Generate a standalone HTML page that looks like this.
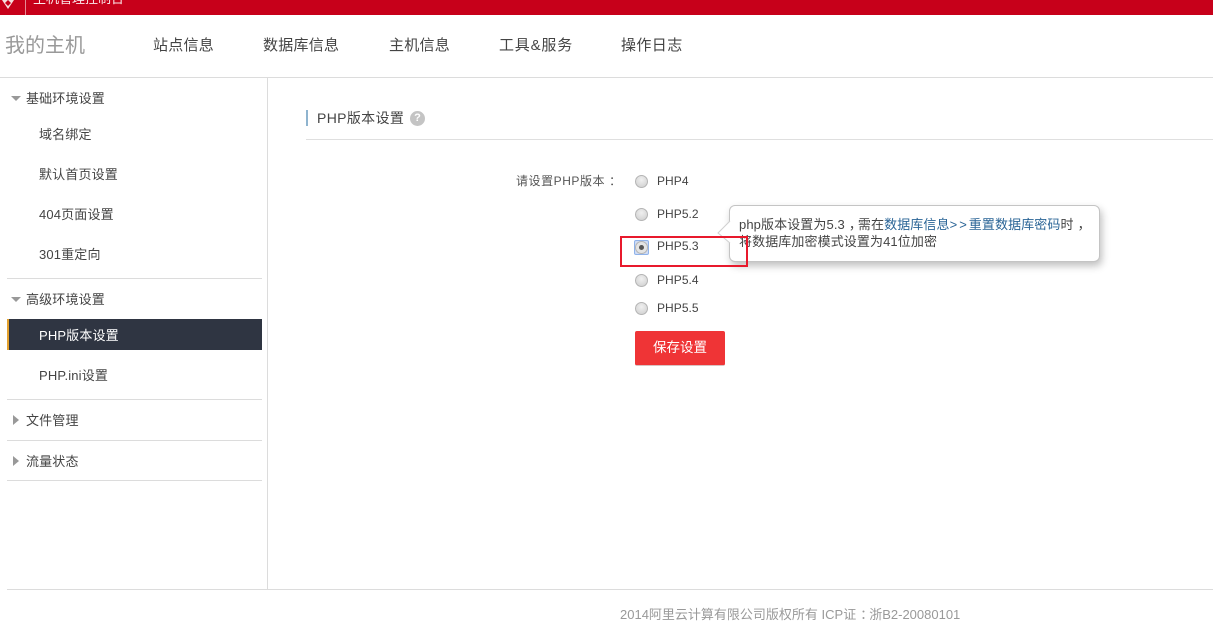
<!DOCTYPE html>
<html><head><meta charset="utf-8">
<style>
html,body{margin:0;padding:0;background:#fff;}
body{width:1213px;height:644px;position:relative;overflow:hidden;font-family:"Liberation Sans","Noto Sans CJK SC",sans-serif;color:#444;}
.t{position:absolute;white-space:nowrap;line-height:20px;}
.b{position:absolute;}
.nav{font-size:15px;top:36px;color:#444;letter-spacing:.25px;}
.s{font-size:13px;color:#444;letter-spacing:.15px;}
.r{position:absolute;left:635px;width:13px;height:13px;border-radius:50%;box-sizing:border-box;border:1px solid #b4b4b4;background:radial-gradient(circle at 50% 35%,#f0f0f0,#cdcdcd);}
.p{font-size:12px;left:657px;color:#444;letter-spacing:.05px;}
.tri{position:absolute;width:0;height:0;border-style:solid;}
a{color:#2a6496;text-decoration:none;}
.k{position:relative;left:4px;letter-spacing:0;}
</style></head><body>
<div class="b" style="left:0;top:0;width:1213px;height:15px;background:#c7001a;overflow:hidden;">
 <svg style="position:absolute;left:1px;top:-6px" width="14" height="16" viewBox="0 0 14 16"><path d="M7 1L13 6L7 15L1 6Z" fill="#f6dede"/><path d="M7 6L10 9L7 12L4 9Z" fill="#c7001a"/></svg>
 <div class="b" style="left:25px;top:0;width:1px;height:15px;background:#e58a95;"></div>
 <div class="t" style="left:33px;top:-11px;font-size:13px;color:#fbe6e8;">主机管理控制台</div>
</div>
<div class="t" style="left:5px;top:36px;font-size:20px;color:#999;">我的主机</div>
<div class="t nav" style="left:153px;">站点信息</div>
<div class="t nav" style="left:263px;">数据库信息</div>
<div class="t nav" style="left:389px;">主机信息</div>
<div class="t nav" style="left:499px;letter-spacing:.8px;">工具&amp;服务</div>
<div class="t nav" style="left:621px;letter-spacing:.4px;">操作日志</div>
<div class="b" style="left:0;top:77px;width:1213px;height:1px;background:#dcdcdc;"></div>
<div class="b" style="left:267px;top:78px;width:1px;height:512px;background:#dcdcdc;"></div>

<div class="tri" style="left:11px;top:96px;border-width:5px 5px 0 5px;border-color:#999 transparent transparent transparent;"></div>
<div class="t s" style="left:26px;top:89px;">基础环境设置</div>
<div class="t s" style="left:39px;top:125px;">域名绑定</div>
<div class="t s" style="left:39px;top:165px;">默认首页设置</div>
<div class="t s" style="left:39px;top:205px;">404页面设置</div>
<div class="t s" style="left:39px;top:245px;">301重定向</div>
<div class="b" style="left:7px;top:278px;width:255px;height:1px;background:#dcdcdc;"></div>
<div class="tri" style="left:11px;top:297px;border-width:5px 5px 0 5px;border-color:#999 transparent transparent transparent;"></div>
<div class="t s" style="left:26px;top:290px;">高级环境设置</div>
<div class="b" style="left:7px;top:319px;width:255px;height:31px;background:#2f3542;"></div>
<div class="b" style="left:7px;top:319px;width:2px;height:31px;background:#e3a12e;"></div>
<div class="t s" style="left:39px;top:326px;color:#fff;">PHP版本设置</div>
<div class="t s" style="left:39px;top:366px;">PHP.ini设置</div>
<div class="b" style="left:7px;top:399px;width:255px;height:1px;background:#dcdcdc;"></div>
<div class="tri" style="left:13px;top:415px;border-width:5px 0 5px 6px;border-color:transparent transparent transparent #999;"></div>
<div class="t s" style="left:26px;top:411px;">文件管理</div>
<div class="b" style="left:7px;top:440px;width:255px;height:1px;background:#dcdcdc;"></div>
<div class="tri" style="left:13px;top:456px;border-width:5px 0 5px 6px;border-color:transparent transparent transparent #999;"></div>
<div class="t s" style="left:26px;top:452px;">流量状态</div>
<div class="b" style="left:7px;top:480px;width:255px;height:1px;background:#dcdcdc;"></div>

<div class="b" style="left:306px;top:110px;width:2px;height:16px;background:#8fb4cf;"></div>
<div class="t" style="left:317px;top:108px;font-size:14px;color:#444;letter-spacing:.35px;">PHP版本设置</div>
<div class="b" style="left:410px;top:111px;width:15px;height:15px;border-radius:50%;background:#c4c4c4;color:#fff;font-size:11px;font-weight:bold;line-height:15px;text-align:center;">?</div>
<div class="b" style="left:306px;top:139px;width:907px;height:1px;background:#dfdfdf;"></div>

<div class="t" style="left:516px;top:171px;font-size:12px;letter-spacing:.55px;color:#555;">请设置PHP版本<span class="k">：</span></div>
<div class="r" style="top:175px;"></div><div class="t p" style="top:171px;">PHP4</div>
<div class="r" style="top:208px;"></div><div class="t p" style="top:204px;">PHP5.2</div>
<div class="b" style="left:634px;top:240px;width:15px;height:15px;box-sizing:border-box;border:1px solid #8fb2ea;border-radius:2px;background:#cfdcf5;"></div>
<div class="r" style="top:241px;background:#e4e4e4;"></div>
<div class="b" style="left:639px;top:245px;width:5px;height:5px;border-radius:50%;background:#555;"></div>
<div class="t p" style="top:236px;">PHP5.3</div>
<div class="r" style="top:274px;"></div><div class="t p" style="top:270px;">PHP5.4</div>
<div class="r" style="top:302px;"></div><div class="t p" style="top:298px;">PHP5.5</div>
<div class="b" style="left:635px;top:331px;width:90px;height:35px;background:#ef3436;border-radius:2px;border-bottom:1px solid #d9c2c2;box-sizing:border-box;color:#fff;font-size:13.5px;line-height:34px;text-align:center;">保存设置</div>

<div class="b" style="left:729px;top:205px;width:371px;height:57px;box-sizing:border-box;background:#fff;border:1px solid #c4c4c4;border-radius:6px;box-shadow:2px 4px 8px rgba(0,0,0,.25);"></div>
<svg class="b" style="left:717px;top:220px" width="14" height="24" viewBox="0 0 14 24"><path d="M13 1L1 13L13 23Z" fill="#fff"/><path d="M13 1L1 13L13 23" fill="none" stroke="#d0d0d0"/></svg>
<div class="t" style="left:739px;top:215px;font-size:13px;letter-spacing:.1px;color:#444;">php版本设置为5.3<span class="k">，</span>需在<a>数据库信息<span style="letter-spacing:2px">&gt;&gt;</span>重置数据库密码</a>时<span class="k">，</span></div>
<div class="t" style="left:739px;top:232px;font-size:13px;letter-spacing:.1px;color:#444;">将数据库加密模式设置为41位加密</div>
<div class="b" style="left:620px;top:236px;width:128px;height:31px;box-sizing:border-box;border:2px solid #e8192c;"></div>

<div class="b" style="left:7px;top:589px;width:1206px;height:1px;background:#dcdcdc;"></div>
<div class="t" style="left:620px;top:605px;font-size:13px;color:#999;">2014阿里云计算有限公司版权所有 ICP证<span class="k">：</span>浙B2-20080101</div>
</body></html>
